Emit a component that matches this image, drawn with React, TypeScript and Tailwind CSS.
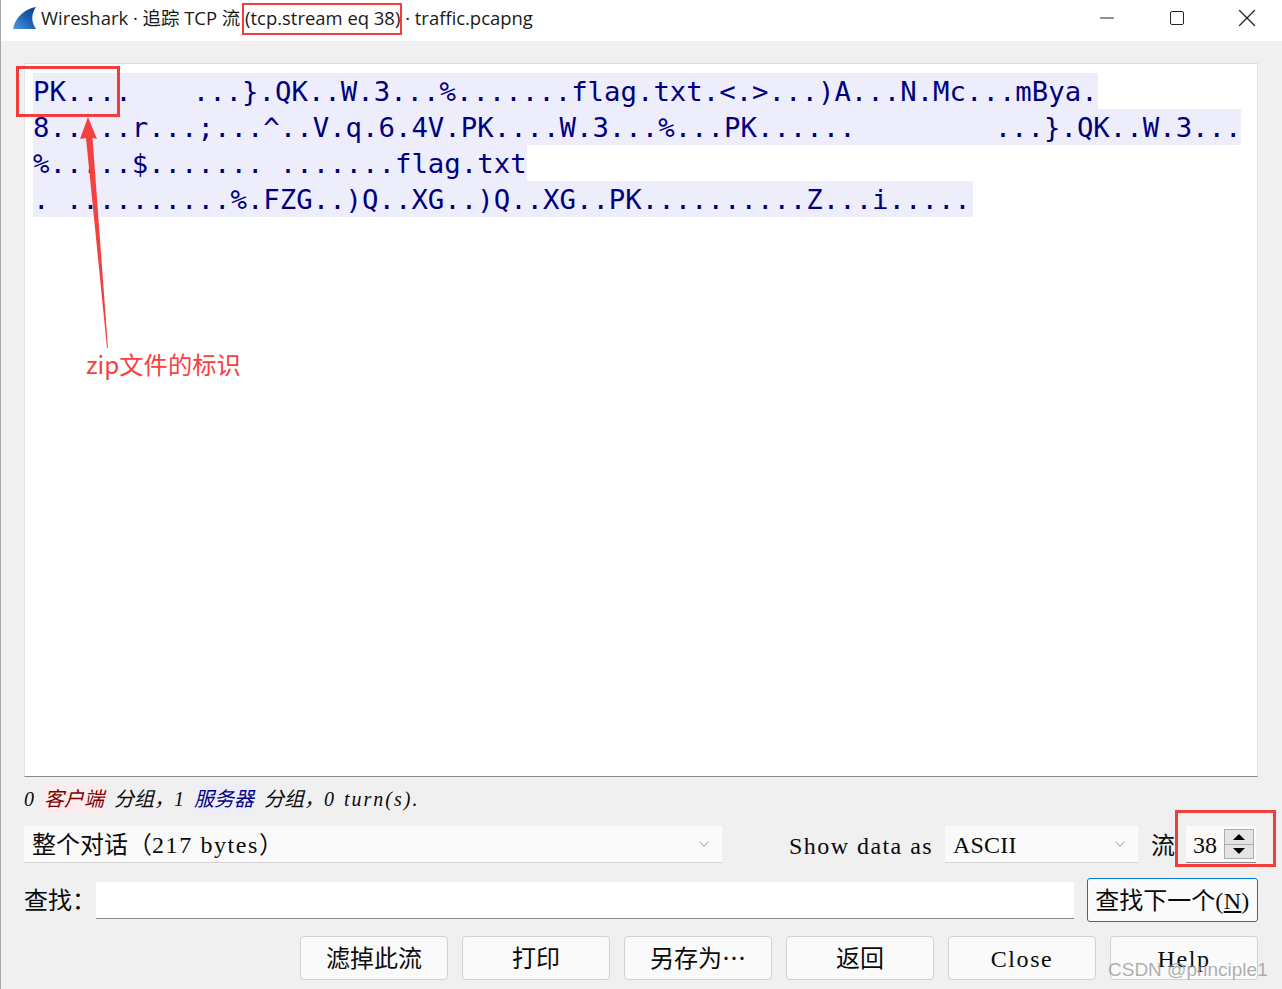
import { ChevronDown, Minus, X } from "lucide-react";

const Gap = ({ className }: { className: string }) => <span className={`inline-block ${className}`} />;

const Line = ({ children, className = "" }: { children: React.ReactNode; className?: string }) => (
  <div className={`h-[36px] whitespace-pre bg-[#ededfb] text-[#00007f] ${className}`}>{children}</div>
);

const Latin = ({ children, className = "tracking-[1.6px]" }: { children: React.ReactNode; className?: string }) => (
  <span className={className}>{children}</span>
);

const Combo = ({ label, className }: { label: React.ReactNode; className: string }) => (
  <div className={`flex h-[37px] shrink-0 items-center justify-between border-b border-[#d4d4d4] bg-[#fafafa] pl-2 pr-[9px] ${className}`}>
    <span className="pt-[2px]">{label}</span>
    <ChevronDown className="h-[18px] w-[18px] text-[#707070]" strokeWidth={1} />
  </div>
);

const FootButton = ({ children }: { children: React.ReactNode }) => (
  <div className="flex h-[44px] w-[148px] items-center justify-center rounded-[4px] border border-[#d0d0d0] bg-[#fafafa] pt-[2px]">
    {children}
  </div>
);

const SharkIcon = () => (
  <svg width="24" height="24" viewBox="0 0 24 24" className="mr-[4px] shrink-0">
    <defs>
      <linearGradient id="fin" x1="0" y1="1" x2="1" y2="0">
        <stop offset="0" stopColor="#4f9be0" />
        <stop offset="0.55" stopColor="#1a5fb4" />
        <stop offset="1" stopColor="#0c3f8c" />
      </linearGradient>
    </defs>
    <path d="M0 23 C2 12 11 3 23 1 C18 8 18 16 23 23 Z" fill="url(#fin)" />
  </svg>
);

const TitleCell = ({ children }: { children: React.ReactNode }) => (
  <div className="flex w-[70px] items-center justify-center">{children}</div>
);

export default function App() {
  return (
    <div className="relative flex h-[989px] w-[1282px] flex-col overflow-hidden border-l border-[#a8a8a8] bg-[#f0f0f0] font-['Liberation_Serif','Noto_Sans_CJK_SC',serif] text-[24px] text-[#0a0a0a]">
      {/* title bar */}
      <div className="flex h-[41px] shrink-0 items-center bg-white pb-[5px] pl-[12px] font-['Open_Sans','Noto_Sans_CJK_SC',sans-serif] text-[18.45px] text-[#1a1a1a]">
        <SharkIcon />
        <span className="whitespace-pre">Wireshark · 追踪 TCP 流 (tcp.stream eq 38) · traffic.pcapng</span>
        <div className="ml-auto flex items-center">
          <TitleCell>
            <Minus className="h-[22px] w-[22px] text-[#222]" strokeWidth={1.3} />
          </TitleCell>
          <TitleCell>
            <div className="mr-[1px] h-[14px] w-[14px] rounded-[2px] border-[1.5px] border-[#222]" />
          </TitleCell>
          <TitleCell>
            <X className="h-[30px] w-[30px] text-[#222]" strokeWidth={1} />
          </TitleCell>
        </div>
      </div>

      <div className="flex flex-1 flex-col pl-[23px] pr-[24px]">
        {/* stream text */}
        <div className="mt-[22px] flex h-[714px] flex-col items-start border-x border-t border-b border-x-[#e2e2e2] border-t-[#dcdcdc] border-b-[#8a8a8a] bg-white pl-[8px] pt-[9px] font-['DejaVu_Sans_Mono',monospace] text-[27.33px] leading-[38px]">
          <Line>
            PK....<Gap className="w-[61px]" />...{"}"}.QK..W.3...%.......flag.txt.&lt;.&gt;...)A...N.Mc...mBya.
          </Line>
          <Line>
            8.....r...;...^..V.q.6.4V.PK....W.3...%...PK......<Gap className="w-[139px]" />...{"}"}.QK..W.3...
          </Line>
          <Line>%.....$....... .......flag.txt</Line>
          <Line className="pr-[2px]">. ..........%.FZG..)Q..XG..)Q..XG..PK..........Z...i.....</Line>
        </div>

        {/* packet summary */}
        <div className="mt-[9px] flex h-[25px] items-center whitespace-pre text-[20px] italic">
          <span className="w-[20px]">0</span>
          <span className="bg-[#fbeded] text-[#7f0000]">客户端</span>
          <Gap className="w-[10px]" />
          <span>分组，</span>
          <span className="w-[20px]">1</span>
          <span className="bg-[#ededfb] text-[#00007f]">服务器</span>
          <Gap className="w-[10px]" />
          <span>分组，</span>
          <span className="w-[20px]">0</span>
          <Latin className="tracking-[2px]">turn(s).</Latin>
        </div>

        {/* conversation / format row */}
        <div className="mt-[15px] flex h-[37px] items-center">
          <Combo
            className="w-[698px]"
            label={
              <>
                整个对话（<Latin>217 bytes</Latin>）
              </>
            }
          />
          <Latin className="ml-[67px] w-[156px] shrink-0 whitespace-nowrap pt-[2px] tracking-[1.45px]">Show data as</Latin>
          <Combo className="w-[193px]" label={<Latin className="tracking-[0.2px]">ASCII</Latin>} />
          <span className="ml-[13px] shrink-0 pt-[2px]">流</span>
          <div className="ml-[11px] flex h-[37px] w-[70px] shrink-0 items-center justify-between border-b border-[#8a8a8a] bg-[#fafafa] pl-[7px] pr-[2px]">
            <Latin className="pt-[2px]">38</Latin>
            <div className="flex h-[30px] w-[30px] flex-col border border-[#adadad] bg-[#e4e4e4]">
              <div className="flex flex-1 items-center justify-center border-b border-[#adadad]">
                <div className="h-0 w-0 border-x-[6px] border-b-[6px] border-x-transparent border-b-black" />
              </div>
              <div className="flex flex-1 items-center justify-center">
                <div className="h-0 w-0 border-x-[6px] border-t-[6px] border-x-transparent border-t-black" />
              </div>
            </div>
          </div>
        </div>

        {/* find row */}
        <div className="mt-[15px] flex h-[44px] items-center">
          <span className="w-[72px] pt-[2px]">查找：</span>
          <div className="h-[37px] w-[978px] border-b border-[#8a8a8a] bg-white" />
          <div className="ml-[13px] flex h-[44px] w-[171px] items-center justify-center whitespace-pre rounded-[3px] border border-[#0078d4] bg-[#fafafa] pt-[2px]">
            查找下一个<Latin className="tracking-[0.4px]">(<span className="underline">N</span>)</Latin>
          </div>
        </div>

        {/* dialog buttons */}
        <div className="mt-[14px] flex justify-end gap-[14px]">
          <FootButton>滤掉此流</FootButton>
          <FootButton>打印</FootButton>
          <FootButton>另存为⋯</FootButton>
          <FootButton>返回</FootButton>
          <FootButton>
            <Latin>Close</Latin>
          </FootButton>
          <FootButton>
            <Latin>Help</Latin>
          </FootButton>
        </div>
      </div>

      {/* annotations on top of the screenshot */}
      <div className="absolute left-[241px] top-[3px] h-[32px] w-[160px] border-[2.5px] border-[#f33c3c]" />
      <div className="absolute left-[15px] top-[66px] h-[51px] w-[104px] border-[3px] border-[#f33c3c]" />
      <div className="absolute left-[1174px] top-[810px] h-[57px] w-[101px] border-[3px] border-[#f33c3c]" />
      <svg className="absolute left-[60px] top-[110px]" width="60" height="245" viewBox="0 0 60 245">
        <path d="M27 7 L36 29 L31.5 28 L47 238 L46 238 L25 28 L19 29 Z" fill="#f54040" />
      </svg>
      <div className="absolute left-[85px] top-[347px] font-['Noto_Sans_CJK_SC',sans-serif] text-[24.3px] leading-[34px] text-[#f84040]">
        zip文件的标识
      </div>
      <div className="absolute left-[1107px] top-[957px] font-['Liberation_Sans',sans-serif] text-[19px] leading-[26px] text-[#9a9a9a]/80">
        CSDN @principle1
      </div>
    </div>
  );
}
